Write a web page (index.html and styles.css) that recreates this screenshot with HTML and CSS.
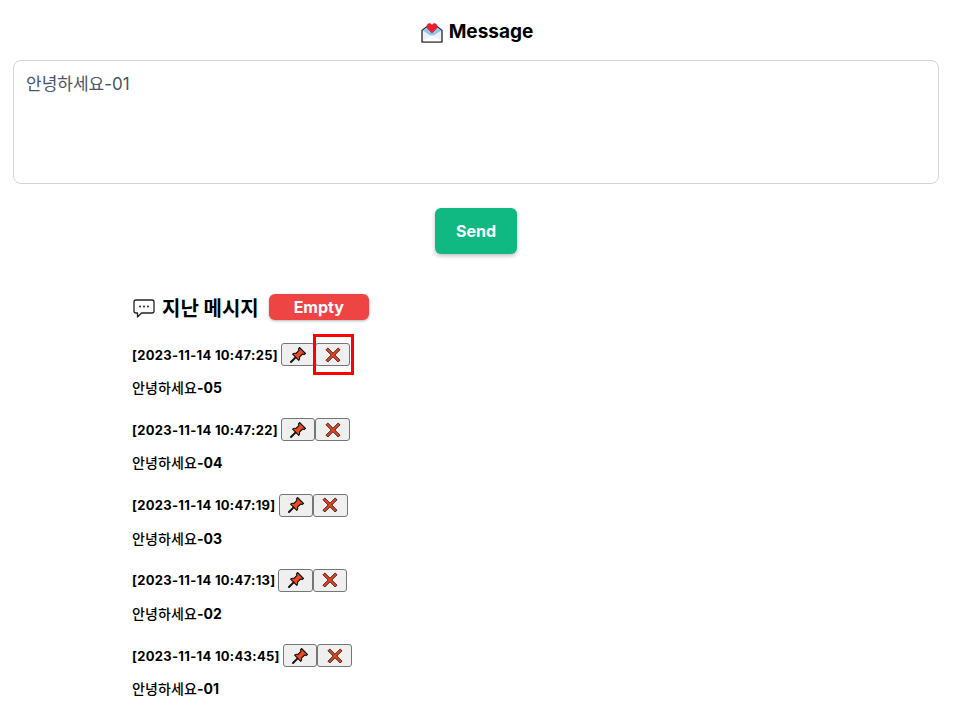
FILE: index.html
```html
<!doctype html>
<html>
<head>
<meta charset="utf-8">
<title>Message</title>
<link rel="stylesheet" href="styles.css">
</head>

<body>
<div class="wrap">
	<h1 class="title">
		<svg class="title-icon" viewBox="0 0 22 21" width="22" height="21">
			<path d="M1 8.5 6 4.5H16L21 8.5V20H1Z" fill="#eef1f3" stroke="#30363b" stroke-width="1.4" stroke-linejoin="round"/>
			<path d="M2 8.8 6.5 5.2H15.5L20 8.8 11 14.5Z" fill="#8fc6f0"/>
			<path d="M11 11.5 6.2 6.6C4.8 4.6 5.9 1.2 8.4 1.2 9.6 1.2 10.5 1.9 11 2.9 11.5 1.9 12.4 1.2 13.6 1.2 16.1 1.2 17.2 4.6 15.8 6.6Z" fill="#e8202e"/>
			<path d="M2 19.2 11 13 20 19.2Z" fill="#fff"/>
		</svg>
		<span class="title-text">Message</span>
	</h1>
	<textarea class="msg-input">안녕하세요-01</textarea>
	<div class="send-row"><button class="send-btn">Send</button></div>

	<div class="history">
		<div class="history-head">
			<svg class="chat-icon" viewBox="0 0 24 24" width="24" height="24">
				<path d="M4 5H20C21.2 5 22 5.8 22 7V16C22 17.2 21.2 18 20 18H9.5L5.5 22V18H4C2.8 18 2 17.2 2 16V7C2 5.8 2.8 5 4 5Z" fill="#fff" stroke="#222" stroke-width="1.3" stroke-linejoin="round"/>
				<circle cx="8" cy="11.5" r="1" fill="#222"/>
				<circle cx="12" cy="11.5" r="1" fill="#222"/>
				<circle cx="16" cy="11.5" r="1" fill="#222"/>
			</svg>
			<h2 class="history-title">지난 메시지</h2>
			<button class="empty-btn">Empty</button>
		</div>

		<div class="item">
			<div class="item-head">
				<span class="stamp">[2023-11-14 10:47:25]</span>
				<button class="icon-btn"><svg width="18" height="18"><use href="#pin"/></svg></button><button class="icon-btn hit"><svg width="18" height="18"><use href="#cross"/></svg><span class="hit-box"></span></button>
			</div>
			<p class="item-text">안녕하세요<b>-05</b></p>
		</div>
		<div class="item">
			<div class="item-head">
				<span class="stamp">[2023-11-14 10:47:22]</span>
				<button class="icon-btn"><svg width="18" height="18"><use href="#pin"/></svg></button><button class="icon-btn"><svg width="18" height="18"><use href="#cross"/></svg></button>
			</div>
			<p class="item-text">안녕하세요<b>-04</b></p>
		</div>
		<div class="item">
			<div class="item-head">
				<span class="stamp">[2023-11-14 10:47:19]</span>
				<button class="icon-btn"><svg width="18" height="18"><use href="#pin"/></svg></button><button class="icon-btn"><svg width="18" height="18"><use href="#cross"/></svg></button>
			</div>
			<p class="item-text">안녕하세요<b>-03</b></p>
		</div>
		<div class="item">
			<div class="item-head">
				<span class="stamp">[2023-11-14 10:47:13]</span>
				<button class="icon-btn"><svg width="18" height="18"><use href="#pin"/></svg></button><button class="icon-btn"><svg width="18" height="18"><use href="#cross"/></svg></button>
			</div>
			<p class="item-text">안녕하세요<b>-02</b></p>
		</div>
		<div class="item">
			<div class="item-head">
				<span class="stamp">[2023-11-14 10:43:45]</span>
				<button class="icon-btn"><svg width="18" height="18"><use href="#pin"/></svg></button><button class="icon-btn"><svg width="18" height="18"><use href="#cross"/></svg></button>
			</div>
			<p class="item-text">안녕하세요<b>-01</b></p>
		</div>
	</div>
</div>

<svg class="defs" width="0" height="0">
	<symbol id="pin" viewBox="0 0 18 18">
		<path d="M10.5 1.5 16.5 7.5 15 8.6 13.6 8 10.5 11.2C11 12.6 10.6 13.6 9.8 14.4L3.6 8.2C4.4 7.4 5.5 7 6.9 7.5L10 4.4 9.4 3Z" fill="#ee4a1e" stroke="#111" stroke-width="1.1" stroke-linejoin="round"/>
		<path d="M6.4 11.6 2 16" stroke="#111" stroke-width="2" stroke-linecap="round"/>
	</symbol>
	<symbol id="cross" viewBox="0 0 18 18">
		<path d="M3.8 2 9 7.2 14.2 2 16 3.8 10.8 9 16 14.2 14.2 16 9 10.8 3.8 16 2 14.2 7.2 9 2 3.8Z" fill="#e8431f" stroke="#2a1a14" stroke-width=".9" stroke-linejoin="round"/>
	</symbol>
</svg>
</body>
</html>
```

FILE: styles.css
```css
*{ margin:0; padding:0; box-sizing:border-box;}
body{ background:#fff; color:#000; font-family:Inter,"Noto Sans CJK KR",sans-serif;}
.wrap{ width:952px; padding:20px 13px 0;}
.title{ display:flex; justify-content:center; align-items:center; gap:6px; height:22px; padding:2px 0 0 2px; font-size:19px; font-weight:700;}
.title-text{ line-height:18px;}
.msg-input{ display:block; width:100%; height:124px; margin-top:18px; padding:11px 12px; border:1px solid #d1d5db; border-radius:8px; font-family:inherit; font-size:17px; line-height:24px; color:#475569; resize:none; outline:none;}
.send-row{ display:flex; justify-content:center; margin-top:24px;}
.send-btn{ width:82px; height:46px; border:0; border-radius:6px; background:#10b981; color:#fff; font-family:inherit; font-size:16px; font-weight:700; box-shadow:0 2px 4px rgba(0,0,0,.25);}
.history{ margin:40px 0 0 119px;}
.history-head{ display:flex; align-items:center; height:26px;}
.chat-icon{ margin-right:6px;}
.history-title{ font-size:20px; font-weight:700; margin-right:10px;}
.empty-btn{ width:100px; height:26px; border:0; border-radius:6px; background:#ef4444; color:#fff; font-family:inherit; font-size:16px; font-weight:700; box-shadow:0 1px 3px rgba(0,0,0,.3);}
.item{ margin-top:23px; height:52px;}
.item + .item{ margin-top:23.34px;}
.item-head{ display:flex; align-items:center; height:23px;}
.stamp{ font-size:13px; font-weight:700; margin-right:3px; letter-spacing:.3px;}
.icon-btn{ display:flex; align-items:center; justify-content:center; width:34.5px; height:23px; background:#efefef; border:1px solid #767676; border-radius:3px;}
.hit{ position:relative;}
.hit-box{ position:absolute; left:-3.5px; top:-10px; width:41px; height:41px; border:3px solid #f00;}
.item-text{ margin-top:12.15px; font-size:14px; font-weight:500; line-height:20px; letter-spacing:.1px;}
.item-text b{ font-weight:700;}
.defs{ position:absolute;}
```
